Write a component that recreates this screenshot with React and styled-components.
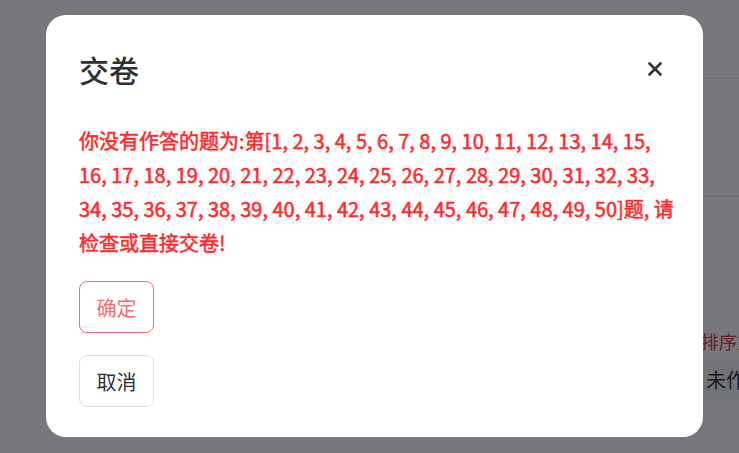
import React from "react";
import styled, { createGlobalStyle } from "styled-components";

const Global = createGlobalStyle`
  html, body { margin: 0; padding: 0; }
  body {
    font-family: "Noto Sans CJK SC", "Noto Sans", sans-serif;
    background: #ffffff;
    overflow: hidden;
  }
`;

const Page = styled.div`
  width: 739px;
  height: 453px;
  display: flex;
  background: #ffffff;
  overflow: hidden;
`;

const LeftArea = styled.div`
  width: 320px;
  flex-shrink: 0;
`;

const RightPanel = styled.div`
  flex: 1;
  display: flex;
  flex-direction: column;
  min-width: 0;
`;

const TopBar = styled.div`
  height: 78px;
  border-bottom: 1px solid #e4e7ed;
  flex-shrink: 0;
`;

const InfoSection = styled.div`
  height: 117px;
  border-bottom: 1px solid #e4e7ed;
  flex-shrink: 0;
`;

const SortRow = styled.div`
  margin-top: 133px;
  padding-left: 381px;
  height: 29px;
  font-size: 18px;
  line-height: 22px;
  color: #e0343a;
  white-space: nowrap;
`;

const TabBand = styled.div`
  height: 40px;
  background: #f2f3f6;
  padding-left: 386px;
  display: flex;
  align-items: center;
  font-size: 20px;
  color: #303133;
  white-space: nowrap;
`;

const Overlay = styled.div`
  position: fixed;
  inset: 0;
  background: rgba(10, 10, 16, 0.55);
  display: flex;
  align-items: flex-start;
  padding: 15px 0 0 46px;
`;

const Dialog = styled.div`
  width: 657px;
  height: 422px;
  box-sizing: border-box;
  background: #ffffff;
  border-radius: 20px;
  padding: 33px 24px 31px 33px;
  display: flex;
  flex-direction: column;
`;

const Header = styled.div`
  display: flex;
  align-items: center;
  justify-content: space-between;
  height: 42px;
  padding-right: 17px;
`;

const Title = styled.h2`
  margin: 0;
  font-size: 30px;
  font-weight: 500;
  line-height: 42px;
  color: #303133;
`;

const CloseButton = styled.button`
  border: none;
  background: transparent;
  padding: 0;
  width: 14px;
  height: 14px;
  display: flex;
  align-items: center;
  justify-content: center;
  cursor: pointer;
`;

const Message = styled.p`
  margin: 34px 0 0 0;
  width: 600px;
  font-size: 20px;
  line-height: 34px;
  font-weight: 400;
  -webkit-text-stroke: 0.55px #ff2b2b;
  color: #ff2b2b;
`;

const Actions = styled.div`
  display: flex;
  flex-direction: column;
  align-items: flex-start;
  gap: 22px;
  margin-top: 21px;
`;

const ActionButton = styled.button`
  width: 75px;
  height: 52px;
  box-sizing: border-box;
  border-radius: 8px;
  background: #ffffff;
  border: 1px solid ${(p) => (p.$danger ? "#f56c6c" : "#dcdfe6")};
  color: ${(p) => (p.$danger ? "#f56c6c" : "#303133")};
  font-family: "Noto Sans CJK SC", sans-serif;
  font-size: 20px;
  font-weight: 400;
  padding: 0;
  cursor: pointer;
`;

const numbers = Array.from({ length: 50 }, (_, i) => i + 1).join(", ");

export default function App() {
  return (
    <>
      <Global />
      <Page>
        <LeftArea />
        <RightPanel>
          <TopBar />
          <InfoSection />
          <SortRow>排序方式</SortRow>
          <TabBand>未作答</TabBand>
        </RightPanel>
      </Page>
      <Overlay>
        <Dialog>
          <Header>
            <Title>交卷</Title>
            <CloseButton aria-label="关闭">
              <svg width="14" height="14" viewBox="0 0 14 14">
                <path d="M1.5 1.5 L12.5 12.5 M12.5 1.5 L1.5 12.5" stroke="#303133" strokeWidth="2.6" strokeLinecap="round" />
              </svg>
            </CloseButton>
          </Header>
          <Message>
            你没有作答的题为:第[{numbers}]题, 请检查或直接交卷!
          </Message>
          <Actions>
            <ActionButton $danger>确定</ActionButton>
            <ActionButton>取消</ActionButton>
          </Actions>
        </Dialog>
      </Overlay>
    </>
  );
}
